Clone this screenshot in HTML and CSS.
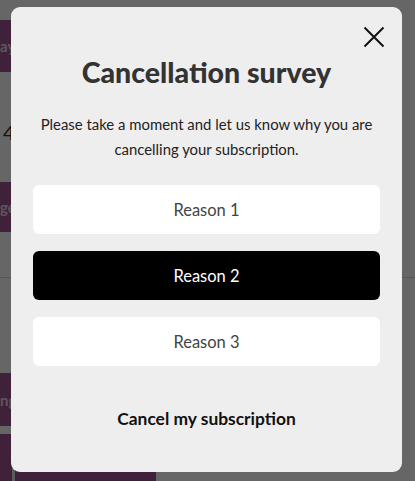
FILE: index.html
```html
<!DOCTYPE html>
<html lang="en">
<head>
<meta charset="utf-8">
<title>Cancellation survey</title>
<link rel="stylesheet" href="styles.css">
</head>
<body>
<div class="page">
  <div class="bar bar-1"><span class="bar-text">ay 14</span></div>
  <div class="num">4</div>
  <div class="bar bar-2"><span class="bar-text">ge plan</span></div>
  <div class="rule"></div>
  <div class="bar bar-3"><span class="bar-text">ng details</span></div>
  <div class="footer-row">
    <div class="foot-a"></div>
    <div class="foot-sep"></div>
    <div class="foot-b"></div>
  </div>
</div>
<div class="overlay"></div>
<div class="modal" role="dialog" aria-labelledby="survey-title">
  <button class="close" aria-label="Close">
    <svg width="22" height="22" viewBox="0 0 22 22" aria-hidden="true">
      <path d="M1.5 1.5 L20.5 20.5 M20.5 1.5 L1.5 20.5" stroke="#111" stroke-width="2" fill="none"/>
    </svg>
  </button>
  <h1 id="survey-title" class="title">Cancellation survey</h1>
  <p class="lead">Please take a moment and let us know why you are cancelling your subscription.</p>
  <div class="reasons">
    <button class="reason">Reason 1</button>
    <button class="reason selected">Reason 2</button>
    <button class="reason">Reason 3</button>
  </div>
  <button class="cancel-link">Cancel my subscription</button>
</div>
</body>
</html>
```

FILE: styles.css
```css
* { box-sizing: border-box; }
html, body { margin: 0; padding: 0; }
body {
  width: 415px;
  height: 481px;
  overflow: hidden;
  background: #ffffff;
  font-family: "Lato", "Noto Sans", sans-serif;
}
.page {
  display: flex;
  flex-direction: column;
  padding-top: 20px;
}
.bar {
  background: #9d5590;
  height: 52px;
  display: flex;
  align-items: center;
  width: 200px;
  overflow: hidden;
}
.bar-text {
  color: #e6d8e3;
  font-size: 15px;
  font-weight: 700;
  white-space: nowrap;
}
.num {
  margin-top: 48px;
  height: 26px;
  font-size: 20px;
  color: #333;
  padding-left: 3px;
}
.bar-2 { margin-top: 36px; height: 50px; }
.rule { margin-top: 45px; height: 1px; background: #d9d9d9; }
.bar-3 { margin-top: 95px; height: 53px; }
.footer-row { margin-top: 8px; display: flex; height: 60px; }
.foot-a { width: 12px; background: #9d5590; }
.foot-sep { width: 3px; background: #e0e0e0; }
.foot-b { width: 141px; background: #9d5590; }

.overlay {
  position: fixed;
  inset: 0;
  background: rgba(0, 0, 0, 0.6);
}
.modal {
  position: fixed;
  left: 11px;
  top: 7px;
  width: 391px;
  height: 465px;
  background: #efeeef;
  border-radius: 9px;
  padding: 47px 22px 0;
  display: flex;
  flex-direction: column;
  align-items: stretch;
  text-align: center;
}
.close {
  position: absolute;
  top: 19px;
  right: 17px;
  width: 22px;
  height: 22px;
  padding: 0;
  border: 0;
  background: none;
  cursor: pointer;
  display: flex;
}
.title {
  margin: 0;
  font-size: 28.5px;
  line-height: 36px;
  font-weight: 900;
  color: #333333;
}
.lead {
  margin: 22px 0 0;
  font-size: 14.9px;
  line-height: 25px;
  color: #222;
}
.reasons {
  margin-top: 23px;
  display: flex;
  flex-direction: column;
  gap: 17px;
}
.reason {
  height: 49px;
  border: 0;
  border-radius: 6px;
  background: #ffffff;
  color: #444444;
  font-family: inherit;
  font-size: 16.5px;
  cursor: pointer;
}
.reason.selected {
  background: #000000;
  color: #ffffff;
}
.cancel-link {
  margin-top: 41px;
  align-self: center;
  border: 0;
  background: none;
  padding: 0;
  font-family: inherit;
  font-size: 17.4px;
  line-height: 24px;
  font-weight: 700;
  color: #111;
  cursor: pointer;
}
```
